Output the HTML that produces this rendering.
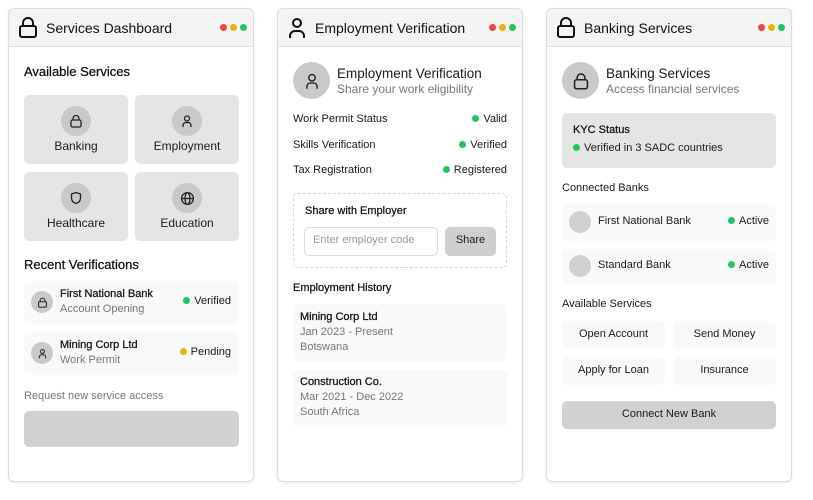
<!DOCTYPE html>
<html><head><meta charset="utf-8"><style>
*{margin:0;padding:0;box-sizing:border-box}
body{width:813px;height:500px;background:#fff;font-family:"Liberation Sans",sans-serif;color:#1a1a1a;position:relative;overflow:hidden}
.p{position:absolute;top:8px;width:246px;height:474px;border:1.5px solid #dcdcdc;border-radius:6px;background:#fff;box-shadow:0 1px 3px rgba(0,0,0,.08);overflow:hidden}
.h{position:absolute;left:0;top:0;right:0;height:38px;background:#f4f4f4;border-bottom:1px solid #dedede}
.h .t{position:absolute;left:37px;top:11px;font-size:14px;color:#111}
.dots{position:absolute;right:6px;top:15px;display:flex;gap:3px}
.dots i{display:block;width:7px;height:7px;border-radius:50%}
.a{position:absolute;white-space:nowrap}
.s12{font-size:12px}.s11{font-size:11px}.g{color:#777}
.b{font-weight:normal;color:#111;-webkit-text-stroke:0.25px #111}
.dot{display:inline-block;width:7px;height:7px;border-radius:50%;background:#22c55e;margin-right:4px;vertical-align:0px}
.box{position:absolute;border-radius:5px}
.circ{position:absolute;border-radius:50%;background:#c9c9c9;display:flex;align-items:center;justify-content:center}
</style></head><body>

<!-- Panel 1 -->
<div class="p" style="left:8px">
 <div class="h">
  <svg style="position:absolute;left:9px;top:8px" width="20" height="22" viewBox="0 0 20 22" fill="none" stroke="#111" stroke-width="2"><rect x="2" y="9" width="16" height="11" rx="2"/><path d="M5 9V6a5 5 0 0 1 10 0v3"/></svg>
  <div class="t">Services Dashboard</div>
  <div class="dots"><i style="background:#ef4444"></i><i style="background:#eab308"></i><i style="background:#22c55e"></i></div>
 </div>
 <div class="a b" style="left:15px;top:55px;font-size:13px">Available Services</div>
 <div class="box" style="left:15px;top:86px;width:104px;height:69px;background:#e5e5e5"></div>
 <div class="box" style="left:126px;top:86px;width:104px;height:69px;background:#e5e5e5"></div>
 <div class="box" style="left:15px;top:163px;width:104px;height:69px;background:#e5e5e5"></div>
 <div class="box" style="left:126px;top:163px;width:104px;height:69px;background:#e5e5e5"></div>
 <div class="circ" style="left:52px;top:97px;width:30px;height:30px"><svg width="14" height="14" viewBox="0 0 14 14" fill="none" stroke="#222" stroke-width="1.3"><rect x="2" y="6" width="10" height="7" rx="1.5"/><path d="M4 6V4.5a3 3 0 0 1 6 0V6"/></svg></div>
 <div class="circ" style="left:163px;top:97px;width:30px;height:30px"><svg width="14" height="14" viewBox="0 0 14 14" fill="none" stroke="#222" stroke-width="1.3"><circle cx="7" cy="4.5" r="2.5"/><path d="M3 13v-1.5a3 3 0 0 1 3-3h2a3 3 0 0 1 3 3V13"/></svg></div>
 <div class="circ" style="left:52px;top:174px;width:30px;height:30px"><svg width="14" height="14" viewBox="0 0 14 14" fill="none" stroke="#222" stroke-width="1.3"><path d="M7 1.5L2.5 3v4c0 3 2 4.7 4.5 5.5 2.5-.8 4.5-2.5 4.5-5.5V3z"/></svg></div>
 <div class="circ" style="left:163px;top:174px;width:30px;height:30px"><svg width="15" height="15" viewBox="0 0 14 14" fill="none" stroke="#222" stroke-width="1.2"><circle cx="7" cy="7" r="5.5"/><ellipse cx="7" cy="7" rx="2.3" ry="5.5"/><path d="M1.5 7h11"/></svg></div>
 <div class="a s12" style="left:15px;top:130px;width:104px;text-align:center">Banking</div>
 <div class="a s12" style="left:126px;top:130px;width:104px;text-align:center">Employment</div>
 <div class="a s12" style="left:15px;top:207px;width:104px;text-align:center">Healthcare</div>
 <div class="a s12" style="left:126px;top:207px;width:104px;text-align:center">Education</div>
 <div class="a b" style="left:15px;top:248px;font-size:13px">Recent Verifications</div>
 <div class="box" style="left:15px;top:272px;width:215px;height:43px;background:#f8f9fa"></div>
 <div class="box" style="left:15px;top:323px;width:215px;height:43px;background:#f8f9fa"></div>
 <div class="circ" style="left:22px;top:282px;width:22px;height:22px"><svg width="11" height="11" viewBox="0 0 14 14" fill="none" stroke="#333" stroke-width="1.5"><rect x="2" y="6" width="10" height="7" rx="1.5"/><path d="M4 6V4.5a3 3 0 0 1 6 0V6"/></svg></div>
 <div class="circ" style="left:22px;top:333px;width:22px;height:22px"><svg width="11" height="11" viewBox="0 0 14 14" fill="none" stroke="#333" stroke-width="1.5"><circle cx="7" cy="4.5" r="2.5"/><path d="M3 13v-1.5a3 3 0 0 1 3-3h2a3 3 0 0 1 3 3V13"/></svg></div>
 <div class="a s11 b" style="left:51px;top:279px">First National Bank</div>
 <div class="a s11 g" style="left:51px;top:294px">Account Opening</div>
 <div class="a s11" style="right:22px;top:286px"><span class="dot"></span>Verified</div>
 <div class="a s11 b" style="left:51px;top:330px">Mining Corp Ltd</div>
 <div class="a s11 g" style="left:51px;top:345px">Work Permit</div>
 <div class="a s11" style="right:22px;top:337px"><span class="dot" style="background:#eab308"></span>Pending</div>
 <div class="a s11 g" style="left:15px;top:381px">Request new service access</div>
 <div class="box" style="left:15px;top:402px;width:215px;height:36px;background:#d1d1d1"></div>
</div>

<!-- Panel 2 -->
<div class="p" style="left:277px">
 <div class="h">
  <svg style="position:absolute;left:9px;top:8px" width="20" height="22" viewBox="0 0 20 22" fill="none" stroke="#111" stroke-width="2"><circle cx="10" cy="6" r="4"/><path d="M3 21v-2a5 5 0 0 1 5-5h4a5 5 0 0 1 5 5v2"/></svg>
  <div class="t">Employment Verification</div>
  <div class="dots"><i style="background:#ef4444"></i><i style="background:#eab308"></i><i style="background:#22c55e"></i></div>
 </div>
 <div class="circ" style="left:15px;top:53px;width:37px;height:37px"><svg width="18" height="18" viewBox="0 0 14 14" fill="none" stroke="#222" stroke-width="1.1"><circle cx="7" cy="4.5" r="2.5"/><path d="M3 13v-1.5a3 3 0 0 1 3-3h2a3 3 0 0 1 3 3V13"/></svg></div>
 <div class="a" style="left:59px;top:57px;font-size:13.5px">Employment Verification</div>
 <div class="a s12 g" style="left:59px;top:73px">Share your work eligibility</div>
 <div class="a s11" style="left:15px;top:104px">Work Permit Status</div>
 <div class="a s11" style="right:15px;top:104px"><span class="dot"></span>Valid</div>
 <div class="a s11" style="left:15px;top:130px">Skills Verification</div>
 <div class="a s11" style="right:15px;top:130px"><span class="dot"></span>Verified</div>
 <div class="a s11" style="left:15px;top:155px">Tax Registration</div>
 <div class="a s11" style="right:15px;top:155px"><span class="dot"></span>Registered</div>
 <div class="box" style="left:15px;top:184px;width:214px;height:75px;border:1px dashed #d6d6d6"></div>
 <div class="a s11 b" style="left:27px;top:196px">Share with Employer</div>
 <div class="box" style="left:26px;top:218px;width:134px;height:29px;border:1px solid #ddd;background:#fff"></div>
 <div class="a s11" style="left:35px;top:225px;color:#999">Enter employer code</div>
 <div class="box" style="left:167px;top:218px;width:51px;height:29px;background:#cfcfcf"></div>
 <div class="a s11" style="left:167px;top:225px;width:51px;text-align:center">Share</div>
 <div class="a s11 b" style="left:15px;top:273px">Employment History</div>
 <div class="box" style="left:15px;top:295px;width:214px;height:58px;background:#f8f9fa"></div>
 <div class="box" style="left:15px;top:361px;width:214px;height:57px;background:#f8f9fa"></div>
 <div class="a s11 b" style="left:22px;top:302px">Mining Corp Ltd</div>
 <div class="a s11 g" style="left:22px;top:317px">Jan 2023 - Present</div>
 <div class="a s11 g" style="left:22px;top:332px">Botswana</div>
 <div class="a s11 b" style="left:22px;top:367px">Construction Co.</div>
 <div class="a s11 g" style="left:22px;top:382px">Mar 2021 - Dec 2022</div>
 <div class="a s11 g" style="left:22px;top:397px">South Africa</div>
</div>

<!-- Panel 3 -->
<div class="p" style="left:546px">
 <div class="h">
  <svg style="position:absolute;left:9px;top:8px" width="20" height="22" viewBox="0 0 20 22" fill="none" stroke="#111" stroke-width="2"><rect x="2" y="9" width="16" height="11" rx="2"/><path d="M5 9V6a5 5 0 0 1 10 0v3"/></svg>
  <div class="t">Banking Services</div>
  <div class="dots"><i style="background:#ef4444"></i><i style="background:#eab308"></i><i style="background:#22c55e"></i></div>
 </div>
 <div class="circ" style="left:15px;top:53px;width:37px;height:37px"><svg width="18" height="18" viewBox="0 0 14 14" fill="none" stroke="#222" stroke-width="1.2"><rect x="2" y="6" width="10" height="7" rx="1.5"/><path d="M4 6V4.5a3 3 0 0 1 6 0V6"/></svg></div>
 <div class="a" style="left:59px;top:57px;font-size:13.5px">Banking Services</div>
 <div class="a s12 g" style="left:59px;top:73px">Access financial services</div>
 <div class="box" style="left:15px;top:104px;width:214px;height:55px;background:#e5e5e5"></div>
 <div class="a s11 b" style="left:26px;top:115px">KYC Status</div>
 <div class="a s11" style="left:26px;top:133px"><span class="dot"></span>Verified in 3 SADC countries</div>
 <div class="a s11" style="left:15px;top:173px">Connected Banks</div>
 <div class="box" style="left:15px;top:195px;width:214px;height:37px;background:#f8f9fa"></div>
 <div class="box" style="left:15px;top:240px;width:214px;height:36px;background:#f8f9fa"></div>
 <div class="circ" style="left:22px;top:202px;width:22px;height:22px;background:#d1d1d3"></div>
 <div class="circ" style="left:22px;top:246px;width:22px;height:22px;background:#d1d1d3"></div>
 <div class="a s11" style="left:51px;top:206px">First National Bank</div>
 <div class="a s11" style="right:22px;top:206px"><span class="dot"></span>Active</div>
 <div class="a s11" style="left:51px;top:250px">Standard Bank</div>
 <div class="a s11" style="right:22px;top:250px"><span class="dot"></span>Active</div>
 <div class="a s11" style="left:15px;top:289px">Available Services</div>
 <div class="box" style="left:15px;top:312px;width:103px;height:28px;background:#f8f9fa"></div>
 <div class="box" style="left:126px;top:312px;width:103px;height:28px;background:#f8f9fa"></div>
 <div class="box" style="left:15px;top:348px;width:103px;height:28px;background:#f8f9fa"></div>
 <div class="box" style="left:126px;top:348px;width:103px;height:28px;background:#f8f9fa"></div>
 <div class="a s11" style="left:15px;top:319px;width:103px;text-align:center">Open Account</div>
 <div class="a s11" style="left:126px;top:319px;width:103px;text-align:center">Send Money</div>
 <div class="a s11" style="left:15px;top:355px;width:103px;text-align:center">Apply for Loan</div>
 <div class="a s11" style="left:126px;top:355px;width:103px;text-align:center">Insurance</div>
 <div class="box" style="left:15px;top:392px;width:214px;height:28px;background:#d1d1d1"></div>
 <div class="a s11" style="left:15px;top:399px;width:214px;text-align:center">Connect New Bank</div>
</div>
</body></html>
